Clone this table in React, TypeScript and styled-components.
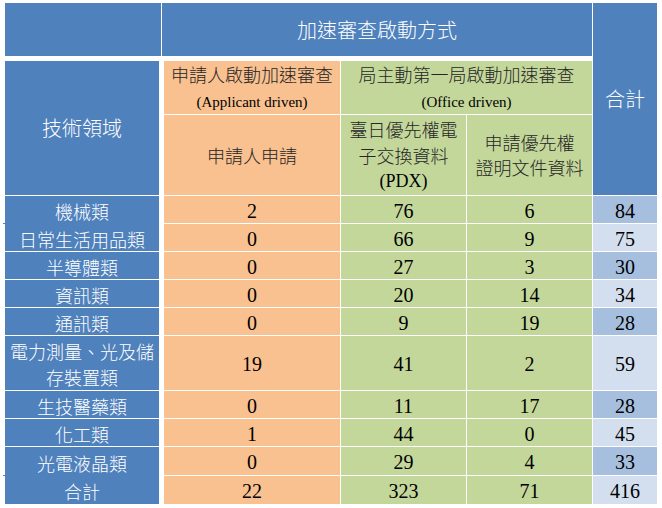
import React from "react";
import styled, { createGlobalStyle, css } from "styled-components";

const GlobalStyle = createGlobalStyle`
  html, body { margin: 0; padding: 0; background: #ffffff; }
  body { font-family: "Noto Sans CJK TC", "Noto Sans", sans-serif; }
`;

const BLUE = "#4f81bd";
const ORANGE = "#f9c090";
const GREEN = "#c4d79b";
const TOTAL_DARK = "#a7bfde";
const TOTAL_LIGHT = "#d3dfee";

const CJK = `"Noto Sans CJK TC", "Noto Sans", sans-serif`;
const SERIF = `"Liberation Serif", "Times New Roman", serif`;

const Page = styled.div`
  padding: 3px 0 0 5px;
`;

const Table = styled.div`
  display: grid;
  width: 652px;
  grid-template-columns: 156px 178px 125px 125px 64px;
  grid-template-rows: 53px 57px 80px repeat(5, 27px) 54px 27px 27px 28px 28px;
  column-gap: 1px;
  row-gap: 1px;
  background: #ffffff;
`;

type Tone = "blue" | "orange" | "green" | "dark" | "light";

const toneBg: Record<Tone, string> = {
  blue: BLUE,
  orange: ORANGE,
  green: GREEN,
  dark: TOTAL_DARK,
  light: TOTAL_LIGHT,
};

interface CellProps {
  $tone: Tone;
  $col?: string;
  $row?: string;
  $gapTop?: boolean;
  $gapRight?: boolean;
  $gapLeft?: boolean;
  $joinNext?: boolean;
  $body?: boolean;
}

const Cell = styled.div<CellProps>`
  position: relative;
  display: flex;
  flex-direction: column;
  align-items: center;
  justify-content: center;
  text-align: center;
  background: ${(p) => toneBg[p.$tone]};
  color: ${(p) => (p.$tone === "blue" ? "#ffffff" : "#262626")};
  ${(p) => p.$col && css`grid-column: ${p.$col};`}
  ${(p) => p.$row && css`grid-row: ${p.$row};`}
  ${(p) => p.$gapTop && css`margin-top: 4px;`}
  ${(p) => p.$gapRight && css`margin-right: 2px;`}
  ${(p) => p.$gapLeft && css`margin-left: 2px;`}
  ${(p) => p.$body && css`padding-top: 2px;`}
  ${(p) =>
    p.$joinNext &&
    css`
      margin-bottom: -1px;
      &::before {
        content: "";
        position: absolute;
        left: -2px;
        bottom: 0;
        width: 2px;
        height: 1px;
        background: ${BLUE};
      }
    `}
`;

const Title = styled.span`
  font-family: ${CJK};
  font-weight: 300;
  font-size: 20px;
  line-height: 1.2;
  white-space: nowrap;
`;

const Line = styled.span<{ $lh: number; $serif?: boolean; $size?: number }>`
  display: block;
  font-family: ${(p) => (p.$serif ? SERIF : CJK)};
  font-weight: ${(p) => (p.$serif ? 400 : 300)};
  color: ${(p) => (p.$serif ? "#000000" : "inherit")};
  font-size: ${(p) => p.$size ?? 18}px;
  line-height: ${(p) => p.$lh}px;
  white-space: nowrap;
`;

const Label = styled.span`
  font-family: ${CJK};
  font-weight: 300;
  font-size: 18px;
  line-height: 26px;
  white-space: nowrap;
`;

const Num = styled.span`
  font-family: ${SERIF};
  font-size: 20px;
  line-height: 22px;
  color: #000000;
`;

interface Row {
  label: string[];
  applicant: number;
  pdx: number;
  priority: number;
  total: number;
  joinNext?: boolean;
}

const rows: Row[] = [
  { label: ["機械類"], applicant: 2, pdx: 76, priority: 6, total: 84, joinNext: true },
  { label: ["日常生活用品類"], applicant: 0, pdx: 66, priority: 9, total: 75 },
  { label: ["半導體類"], applicant: 0, pdx: 27, priority: 3, total: 30 },
  { label: ["資訊類"], applicant: 0, pdx: 20, priority: 14, total: 34 },
  { label: ["通訊類"], applicant: 0, pdx: 9, priority: 19, total: 28 },
  { label: ["電力測量、光及儲", "存裝置類"], applicant: 19, pdx: 41, priority: 2, total: 59 },
  { label: ["生技醫藥類"], applicant: 0, pdx: 11, priority: 17, total: 28 },
  { label: ["化工類"], applicant: 1, pdx: 44, priority: 0, total: 45 },
  { label: ["光電液晶類"], applicant: 0, pdx: 29, priority: 4, total: 33, joinNext: true },
  { label: ["合計"], applicant: 22, pdx: 323, priority: 71, total: 416 },
];

export default function App() {
  return (
    <Page>
      <GlobalStyle />
      <Table>
        <Cell $tone="blue" $col="1" $row="1" />
        <Cell $tone="blue" $col="2 / 5" $row="1">
          <Title>加速審查啟動方式</Title>
        </Cell>
        <Cell $tone="blue" $col="5" $row="1 / 4">
          <Title>合計</Title>
        </Cell>

        <Cell $tone="blue" $col="1" $row="2 / 4" $gapTop $gapRight>
          <Title>技術領域</Title>
        </Cell>
        <Cell $tone="orange" $col="2" $row="2" $gapTop $gapLeft>
          <Line $lh={28}>申請人啟動加速審查</Line>
          <Line $lh={28} $serif $size={15}>(Applicant driven)</Line>
        </Cell>
        <Cell $tone="green" $col="3 / 5" $row="2" $gapTop>
          <Line $lh={28}>局主動第一局啟動加速審查</Line>
          <Line $lh={28} $serif $size={15}>(Office driven)</Line>
        </Cell>

        <Cell $tone="orange" $col="2" $row="3" $gapLeft>
          <Line $lh={26}>申請人申請</Line>
        </Cell>
        <Cell $tone="green" $col="3" $row="3">
          <Line $lh={26}>臺日優先權電</Line>
          <Line $lh={26}>子交換資料</Line>
          <Line $lh={26} $serif>(PDX)</Line>
        </Cell>
        <Cell $tone="green" $col="4" $row="3">
          <Line $lh={25}>申請優先權</Line>
          <Line $lh={25}>證明文件資料</Line>
        </Cell>

        {rows.map((r, i) => (
          <React.Fragment key={r.label.join("")}>
            <Cell $tone="blue" $body $gapRight $joinNext={r.joinNext}>
              {r.label.map((l) => (
                <Label key={l}>{l}</Label>
              ))}
            </Cell>
            <Cell $tone="orange" $body $gapLeft>
              <Num>{r.applicant}</Num>
            </Cell>
            <Cell $tone="green" $body>
              <Num>{r.pdx}</Num>
            </Cell>
            <Cell $tone="green" $body>
              <Num>{r.priority}</Num>
            </Cell>
            <Cell $tone={i % 2 === 0 ? "dark" : "light"} $body>
              <Num>{r.total}</Num>
            </Cell>
          </React.Fragment>
        ))}
      </Table>
    </Page>
  );
}
